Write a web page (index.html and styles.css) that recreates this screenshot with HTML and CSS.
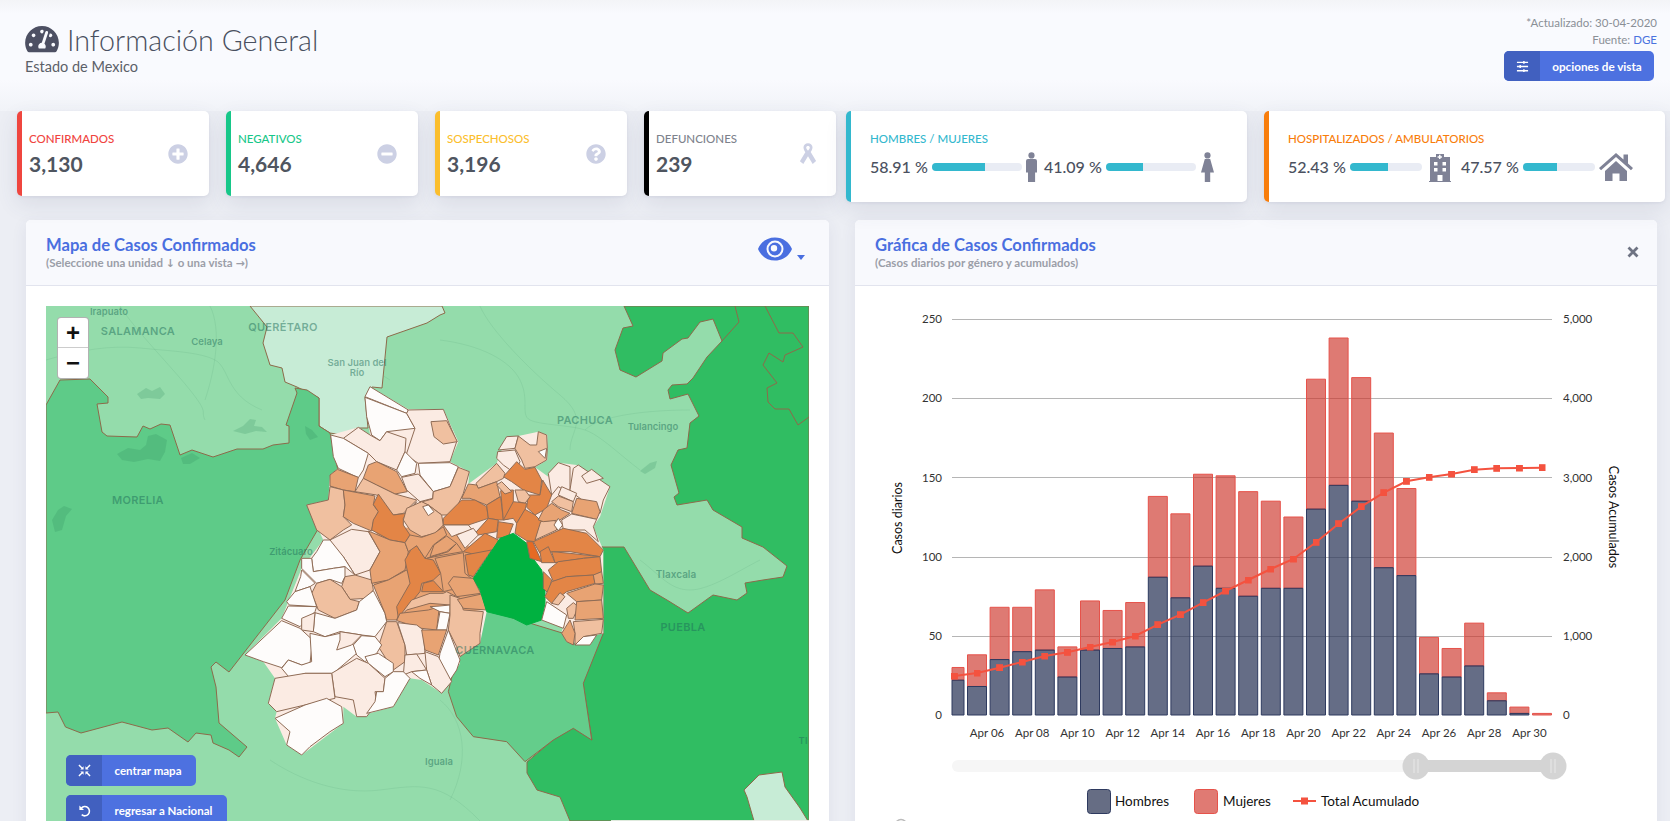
FILE: index.html
```html
<!DOCTYPE html>
<html lang="es">
<head>
<meta charset="utf-8">
<title>Información General</title>
<link rel="stylesheet" href="styles.css">
</head>
<body>
<div class="page">
  <header class="title-bar">
    <div class="title-left">
      <h1 class="page-title">
        <svg class="gauge" viewBox="0 0 576 512"><path d="M288 32C128.94 32 0 160.94 0 320c0 52.8 14.25 102.26 39.06 144.8 5.61 9.62 16.3 15.2 27.44 15.2h443c11.14 0 21.83-5.58 27.44-15.2C561.75 422.26 576 372.8 576 320c0-159.06-128.94-288-288-288zm0 64c14.71 0 26.58 10.13 30.32 23.65-1.11 2.26-2.64 4.23-3.45 6.67l-9.22 27.67c-5.13 3.49-10.97 6.01-17.64 6.01-17.67 0-32-14.33-32-32S270.33 96 288 96zM96 384c-17.67 0-32-14.33-32-32s14.33-32 32-32 32 14.33 32 32-14.33 32-32 32zm48-160c-17.67 0-32-14.33-32-32s14.33-32 32-32 32 14.33 32 32-14.33 32-32 32zm246.77-72.41l-61.33 184C343.13 347.33 352 364.54 352 384c0 11.72-3.38 22.55-8.88 32H232.88c-5.5-9.45-8.88-20.28-8.88-32 0-33.94 26.5-61.43 59.9-63.59l61.34-184.01c4.17-12.56 17.73-19.45 30.36-15.17 12.57 4.19 19.35 17.77 15.17 30.36zm14.66 57.2l15.52-46.55c3.47-1.29 7.13-2.23 11.05-2.23 17.67 0 32 14.33 32 32s-14.33 32-32 32c-11.38-.01-20.89-6.28-26.57-15.22zM480 384c-17.67 0-32-14.33-32-32s14.33-32 32-32 32 14.33 32 32-14.33 32-32 32z"/></svg>
        <span>Información General</span>
      </h1>
      <div class="page-sub">Estado de Mexico</div>
    </div>
    <div class="title-right">
      <div class="meta">*Actualizado: 30-04-2020</div>
      <div class="meta">Fuente: <a class="link">DGE</a></div>
      <button class="btn btn-opts">
        <span class="btn-ico"><svg viewBox="0 0 14 14" class="ico14"><path d="M1 2.5h12M1 7h12M1 11.5h12" stroke="#fff" stroke-width="1.5" fill="none"/><path d="M8.500 1v3M4.500 5.500v3M8.500 10v3" stroke="#fff" stroke-width="1.6" fill="none"/></svg></span>
        <span class="btn-txt">opciones de vista</span>
      </button>
    </div>
  </header>

  <section class="stats">
    <div class="stats-small">
      <div class="card small c-red">
        <div class="card-main"><div class="card-label">CONFIRMADOS</div><div class="card-value">3,130</div></div>
        <svg class="card-ico" viewBox="0 0 512 512"><path d="M256 8C119 8 8 119 8 256s111 248 248 248 248-111 248-248S393 8 256 8zm144 276c0 6.6-5.4 12-12 12h-92v92c0 6.6-5.4 12-12 12h-56c-6.6 0-12-5.4-12-12v-92h-92c-6.6 0-12-5.4-12-12v-56c0-6.6 5.4-12 12-12h92v-92c0-6.6 5.4-12 12-12h56c6.6 0 12 5.400 12 12v92h92c6.6 0 12 5.4 12 12v56z"/></svg>
      </div>
      <div class="card small c-green">
        <div class="card-main"><div class="card-label">NEGATIVOS</div><div class="card-value">4,646</div></div>
        <svg class="card-ico" viewBox="0 0 512 512"><path d="M256 8C119 8 8 119 8 256s111 248 248 248 248-111 248-248S393 8 256 8zM124 296c-6.6 0-12-5.4-12-12v-56c0-6.6 5.4-12 12-12h264c6.6 0 12 5.4 12 12v56c0 6.6-5.4 12-12 12H124z"/></svg>
      </div>
      <div class="card small c-yellow">
        <div class="card-main"><div class="card-label">SOSPECHOSOS</div><div class="card-value">3,196</div></div>
        <svg class="card-ico" viewBox="0 0 512 512"><path d="M504 256c0 136.997-111.043 248-248 248S8 392.997 8 256C8 119.083 119.043 8 256 8s248 111.083 248 248zM262.655 90c-54.497 0-89.255 22.957-116.549 63.758-3.536 5.286-2.353 12.415 2.715 16.258l34.699 26.31c5.205 3.947 12.621 3.008 16.665-2.122 17.864-22.658 30.113-35.797 57.303-35.797 20.429 0 45.698 13.148 45.698 32.958 0 14.976-12.363 22.667-32.534 33.976C247.128 238.528 216 254.941 216 296v4c0 6.627 5.373 12 12 12h56c6.627 0 12-5.373 12-12v-1.333c0-28.462 83.186-29.647 83.186-106.667 0-58.002-60.165-102-116.531-102zM256 338c-25.365 0-46 20.635-46 46 0 25.364 20.635 46 46 46s46-20.636 46-46c0-25.365-20.635-46-46-46z"/></svg>
      </div>
      <div class="card small c-black">
        <div class="card-main"><div class="card-label">DEFUNCIONES</div><div class="card-value">239</div></div>
        <svg class="card-ico ribbon" viewBox="0 0 20 24"><path d="M10 0c3 0 5 2 5 4.500 0 2-.9 3.700-2 5.300l6 10-3.800 3.200L10 14.500 4.800 23.200 1 20l6-10C5.800 8.200 5 6.500 5 4.500 5 2 7 0 10 0zm0 3C8.800 3 8 3.700 8 4.700c0 .9.800 2.200 2 3.700 1.200-1.500 2-2.800 2-3.700C12 3.700 11.200 3 10 3z"/></svg>
      </div>
    </div>
    <div class="stats-wide">
      <div class="card wide c-cyan">
        <div class="card-label">HOMBRES / MUJERES</div>
        <div class="pair-row">
          <span class="pct">58.91 %</span>
          <span class="bar b90"><span class="bar-fill" style="width:58.91%"></span></span>
          <svg class="person man" viewBox="0 0 13 30"><circle cx="6.500" cy="3.400" r="3.100"/><path d="M1 9a2 2 0 0 1 2-2h7a2 2 0 0 1 2 2v11.500h-1.900V30H3V20.500H1z"/></svg>
          <span class="pct gap-pct">41.09 %</span>
          <span class="bar b90"><span class="bar-fill" style="width:41.09%"></span></span>
          <svg class="person" viewBox="0 0 13 30"><circle cx="6.500" cy="3.400" r="3.100"/><path d="M3.800 7h5.400l3.800 13.500H9.200V30H3.800v-9.500H0z"/></svg>
        </div>
      </div>
      <div class="card wide c-orange">
        <div class="card-label">HOSPITALIZADOS / AMBULATORIOS</div>
        <div class="pair-row">
          <span class="pct">52.43 %</span>
          <span class="bar b72"><span class="bar-fill" style="width:52.43%"></span></span>
          <svg class="hosp" viewBox="0 0 26 30"><path fill-rule="evenodd" d="M2 30v-1h1V5h6V2h8v3h6v24h1v1zM12 2.800v1.400h-1.400v1.500H12v1.400h1.500V5.700h1.400V4.200h-1.400V2.800zM7 10v3.500h3.500V10zm8.500 0v3.500H19V10zM7 16v3.500h3.500V16zm8.500 0v3.500H19V16zM10.500 23v6h5v-6z"/></svg>
          <span class="pct gap-pct2">47.57 %</span>
          <span class="bar b72"><span class="bar-fill" style="width:47.57%"></span></span>
          <svg class="house" viewBox="0 0 34 28"><path d="M17 0 0 15l2 2.200L17 4l15 13.200 2-2.200-5-4.400V1.500h-4.500v5.100zM6 18v10h7.500v-7.500h7V28H28V18L17 8z"/></svg>
        </div>
      </div>
    </div>
  </section>

  <section class="panels">
    <article class="panel">
      <div class="panel-head">
        <div>
          <div class="panel-title">Mapa de Casos Confirmados</div>
          <div class="panel-sub">(Seleccione una unidad <span class="arrow">↓</span> o una vista <span class="arrow">→</span>)</div>
        </div>
        <div class="view-toggle">
          <svg class="eye" viewBox="0 0 34 24"><path fill-rule="evenodd" d="M0 12C3 5 9 .5 17 .5S31 5 34 12c-3 7-9 11.500-17 11.500S3 19 0 12zm17-8.500a8.500 8.500 0 1 0 0 17 8.500 8.500 0 0 0 0-17z"/><path fill-rule="evenodd" d="M17 5.500a6.500 6.500 0 1 1 0 13 6.500 6.500 0 0 1 0-13zM16 8a3.200 3.200 0 0 0 0 6.400A3.200 3.200 0 0 0 16 8z"/></svg>
          <span class="caret"></span>
        </div>
      </div>
      <div class="panel-body">
        <div class="map">
          <svg class="map-svg" viewBox="46 306 763 515" width="763" height="515">
            <rect class="g-base" x="46" y="306" width="763" height="515"/>
            <g class="road">
              <path d="M46 360C80 350 110 345 140 348S200 352 215 360 225 395 262 410"/>
              <path d="M120 306C135 330 170 365 190 390S200 410 205 420"/>
              <path d="M210 306C222 330 215 370 205 400"/>
              <path d="M440 340C480 345 510 360 520 380S520 415 530 420 570 425 585 430 620 455 640 470"/>
              <path d="M480 306C490 330 530 370 560 395S570 430 570 450"/>
              <path d="M585 430C600 415 650 410 690 410"/>
              <path d="M640 560C660 575 670 590 690 590S740 570 760 560"/>
              <path d="M300 325C320 340 350 355 390 380"/>
              <path d="M270 760C300 780 340 795 380 790S440 780 480 821"/>
              <path d="M440 700C465 720 470 760 450 800"/>
              <path d="M60 520C90 505 120 490 150 492S240 490 270 470"/>
              <path d="M60 610C100 590 150 570 190 575S230 585 240 590"/>
              <path d="M620 640C650 650 700 660 730 680S750 695 760 700"/>
            </g>
            <path class="g-pale b" d="M250 306 267 327 263 343 270 365 282 368 285 382 297 387 319 398 319 426 330 433 342 435 357 428 368 428 365 397 372 387 382 388 387 337 427 323 440 315 445 313 442 306Z"/>
            <path class="g-mid b" d="M46 405 60 380 90 379 108 397 108 403 97 404 102 432 107 436 137 437 143 426 150 429 161 424 170 425 180 455 192 450 213 457 237 449 263 449 273 445 289 443 289 426 286 425 297 393 295 388 307 390 319 398 319 426 330 433 340 480 335 500 300 560 285 600 229 672 216 662 211 667 216 687 219 723 247 747 239 757 229 750 213 743 211 735 196 733 188 742 168 728 152 730 122 722 81 733 65.500 727 58 712 46 713Z"/>
            <path class="g-dark b" d="M624 306 633 326 623 328 615 350 620 370 636 377 662 361 663 353 682 339 688 338 700 322 713 319 722 341 707 357 693 378 687 384 672 385 668 390 670 399 688 394 699 416 690 423 687 448 678 450 671 465 679 493 674 497 677 505 707 500 713 510 742 527 742 538 763 547 787 566 783 577 763 580 745 583 747 593 737 600 713 595 706 600 688 613 667 600 650 590 624 547 603 547 596 545 603 587 603 633 583 683 592 740 573 728 553 740 527 762 527 773 537 790 560 797 570 821 809 821 809 306Z"/>
            <path class="g-line" d="M735 306 739 322 722 341M765 306 779 333 793 333 803 347 785 355 783 362 769 353 763 365 777 383 767 388 768 402 775 409 789 409 798 425 809 417"/>
            <path class="g-pale b" d="M759 775 782 772 785 787 800 808 808 821 754 821 747 797 744 790Z"/>
            <g class="lake">
              <path d="M137 394 146 388 152 391 160 387 165 394 160 399 148 398 141 399Z"/>
              <path d="M233 431 243 426 250 419 256 420 254 426 262 427 267 432 256 431 245 434Z"/>
              <path d="M117 454 128 448 140 450 146 445 148 436 156 434 167 440 165 452 160 461 148 459 134 462 122 460Z"/>
              <path d="M181 458 192 453 200 458 190 464 183 464Z"/>
              <path d="M52 520 58 510 64 506 72 509 66 516 62 530 55 532Z"/>
              <path d="M640 471 650 463 657 461 655 468 645 474Z"/>
              <path d="M305 426 312 430 318 437 310 440 306 434Z"/>
              <path d="M352 548 364 545 372 552 362 556Z"/>
            </g>
            <g class="maplabels">
              <text class="lb-s" x="109" y="315">Irapuato</text>
              <text class="lb-c" x="138" y="335">SALAMANCA</text>
              <text class="lb-s" x="207" y="345">Celaya</text>
              <text class="lb-c" x="283" y="331">QUERÉTARO</text>
              <text class="lb-s" x="357" y="366">San Juan del</text>
              <text class="lb-s" x="357" y="376">Río</text>
              <text class="lb-c" x="585" y="424">PACHUCA</text>
              <text class="lb-s" x="653" y="430">Tulancingo</text>
              <text class="lb-c" x="138" y="504">MORELIA</text>
              <text class="lb-s" x="291" y="555">Zitácuaro</text>
              <text class="lb-m" x="676" y="578">Tlaxcala</text>
              <text class="lb-c" x="683" y="631">PUEBLA</text>
              <text class="lb-s" x="439" y="765">Iguala</text>
              <text class="lb-s" x="803" y="744">Tl</text>
            </g>
            <g transform="translate(230 370) scale(.33333)">
              <path class="g-morelos b3" d="M680 860 655 965 680 1040 730 1100 830 1115 885 1175 970 1110 1030 1075 1085 1110 1060 940 1120 790 1000 790 770 720Z"/>
              <path class="u" d="M420 50 535 118 640 118 685 215 660 275 718 305 715 342 800 280 830 200 865 198 925 185 952 195 952 270 915 292 955 320 985 278 1040 285 1140 350 1110 440 1090 470 1120 540 1120 790 1100 795 1080 825 1010 815 995 785 1000 770 935 750 770 725 750 820 690 860 690 880 635 970 575 930 540 925 490 1010 380 1040 340 1010 340 1060 215 1155 170 1125 135 1045 140 1025 115 1000 135 925 100 875 45 855 155 745 215 595 280 510 230 405 295 390 300 315 325 295 302 195 385 172 420 195 405 80Z"/>
              <path class="um" d="M440 480 700 460 760 720 500 750 430 640Z"/>
              <g class="muns">
                <polygon class="w" points="420,50 535,120 530,130 405,80"/>
                <polygon class="w" points="405,82 530,130 555,175 470,185 450,212 425,195 410,140"/>
                <polygon class="p" points="535,120 640,118 680,215 660,275 565,280 535,260 530,250 555,175 530,130"/>
                <polygon class="l" points="603,155 650,152 682,215 640,222 612,200"/>
                <polygon class="p" points="340,205 385,172 420,195 450,212 470,185 528,205 525,245 500,300 440,275 415,250"/>
                <polygon class="w" points="302,195 340,205 415,250 400,300 385,323 325,295 310,260"/>
                <polygon class="w" points="525,245 560,280 555,310 515,320 500,300"/>
                <polygon class="w" points="565,280 660,278 685,290 660,350 610,365 570,315"/>
                <polygon class="p" points="515,322 565,312 610,365 608,385 570,395 530,360"/>
                <polygon class="l" points="685,292 718,305 700,370 670,435 635,435 595,405 570,397 608,387 610,365 660,350"/>
                <polygon class="m" points="440,275 500,305 532,365 495,372 440,345 400,325 415,285"/>
                <polygon class="l" points="400,325 440,345 495,372 560,390 520,430 490,435 440,375 375,365"/>
                <polygon class="m" points="322,298 385,322 375,365 340,360 300,348 300,315"/>
                <polygon class="l" points="300,350 340,360 345,405 340,440 365,465 340,480 300,510 260,480 230,405 295,390"/>
                <polygon class="m" points="340,360 435,378 430,405 445,425 430,455 425,483 370,460 340,440 345,405"/>
                <polygon class="d" points="445,372 490,435 530,430 560,395 520,445 520,465 540,495 525,518 480,510 425,480 430,450 445,425 430,403"/>
                <polygon class="l" points="575,395 595,405 635,435 640,465 615,490 575,500 540,480 520,450 530,415"/>
                <polygon class="w" points="578,410 595,405 612,425 595,437"/>
                <polygon class="p" points="300,510 365,478 415,485 450,545 420,600 375,615 340,560 310,530"/>
                <polygon class="w" points="280,510 300,510 340,560 375,615 345,590 310,595 250,605 245,565 260,545"/>
                <polygon class="w" points="215,565 245,565 250,605 310,595 345,590 345,620 335,640 300,628 260,640 215,595"/>
                <polygon class="w" points="215,600 255,640 240,650 195,665 212,620"/>
                <polygon class="l" points="345,620 375,615 425,630 430,660 410,685 360,688 335,650"/>
                <polygon class="l" points="260,640 300,628 335,650 360,688 388,695 380,720 315,745 265,720 245,670"/>
                <polygon class="w" points="195,665 240,650 260,710 178,705 170,695"/>
                <polygon class="w" points="175,708 260,710 255,725 210,770 155,745"/>
                <polygon class="w" points="255,728 315,745 380,720 388,695 430,662 465,730 470,755 435,800 395,795 330,785 285,800 250,785"/>
                <polygon class="p" points="215,745 255,728 250,785 215,780"/>
                <polygon class="m" points="415,483 480,510 525,518 535,545 525,600 475,630 425,640 420,600 450,545"/>
                <polygon class="m" points="430,645 475,630 530,600 545,630 500,750 470,750 465,730"/>
                <polygon class="d" points="560,527 585,565 610,570 632,610 610,630 575,640 570,665 505,745 500,710 540,640 525,570 545,535"/>
                <polygon class="d" points="610,632 640,665 575,665 580,640"/>
                <polygon class="m" points="525,518 540,495 575,502 615,488 640,470 650,495 610,525 585,565 560,527 535,545"/>
                <polygon class="m" points="650,498 680,520 650,545 600,560 612,525"/>
                <polygon class="m" points="680,520 698,545 640,555 590,565 655,545"/>
                <polygon class="m" points="615,565 700,548 705,610 730,630 740,650 660,660 640,665 632,610"/>
                <polygon class="m" points="655,640 670,620 730,625 752,670 680,680"/>
                <polygon class="l" points="500,750 545,690 600,670 640,670 650,665 680,680 660,705 600,700 530,720"/>
                <polygon class="m" points="510,730 595,720 628,710 620,780 575,775 500,752"/>
                <polygon class="w" points="600,710 630,708 660,705 660,730 630,725"/>
                <polygon class="w" points="630,725 660,730 650,780 620,780"/>
                <polygon class="l" points="660,675 690,685 700,720 760,725 750,790 750,820 690,860 680,830 655,780 660,735"/>
                <polygon class="m" points="682,688 755,672 770,720 700,715"/>
                <polygon class="l" points="470,755 500,755 525,825 525,875 490,900 445,830"/>
                <polygon class="p" points="503,758 560,765 580,780 585,850 530,855 525,825"/>
                <polygon class="m" points="575,780 650,780 625,855 585,840"/>
                <polygon class="w" points="655,780 680,845 690,870 680,900 660,930 625,880 630,850"/>
                <polygon class="p" points="525,855 560,852 590,900 545,905 520,915"/>
                <polygon class="p" points="585,845 625,860 665,935 635,970 605,945 590,900"/>
                <polygon class="w" points="545,905 590,900 605,945 570,925"/>
                <polygon class="w" points="45,855 155,752 210,775 248,810 240,880 215,885 175,870 155,893 100,875"/>
                <polygon class="w" points="240,790 285,800 330,790 375,830 380,850 345,880 310,910 225,910 180,925 155,895 175,870 215,885 245,875"/>
                <polygon class="p" points="330,785 395,795 365,825 320,840 330,810"/>
                <polygon class="w" points="395,797 435,800 455,825 440,850 405,875 380,855 370,825"/>
                <polygon class="w" points="405,860 445,850 490,880 490,905 465,920 415,880"/>
                <polygon class="p" points="305,910 380,865 415,880 465,925 460,965 435,965 440,1000 410,1040 380,1040 370,990 315,980"/>
                <polygon class="p" points="135,925 225,910 305,910 315,985 225,1005 140,1025 115,1000"/>
                <polygon class="w" points="465,925 490,905 520,905 540,925 490,1010 410,1030 435,995 440,965 460,965"/>
                <polygon class="w" points="135,1045 225,1005 290,985 335,1010 340,1060 300,1085 240,1130 215,1155 170,1125 180,1085"/>
                <polygon class="p" points="830,200 865,198 855,235 805,240"/>
                <polygon class="p" points="803,245 855,240 870,275 855,310 820,285 800,265"/>
                <polygon class="l" points="865,198 900,225 920,225 925,185 950,195 952,235 950,270 915,290 885,295 875,270 855,235"/>
                <polygon class="w" points="925,245 950,235 945,265"/>
                <polygon class="d" points="820,320 860,275 885,298 915,292 935,330 930,375 880,360 845,335"/>
                <polygon class="l" points="800,280 825,310 820,325 800,335 745,355 738,340"/>
                <polygon class="d" points="938,330 965,375 950,415 915,435 890,412 895,375 930,375"/>
                <polygon class="m" points="695,385 715,342 740,345 745,355 800,335 810,380 770,405 720,385"/>
                <polygon class="d" points="640,445 695,390 735,390 770,410 775,445 715,465 640,465"/>
                <polygon class="d" points="770,405 812,380 820,450 805,450 775,445"/>
                <polygon class="d" points="812,362 850,360 850,395 840,445 820,450"/>
                <polygon class="l" points="855,360 885,360 900,380 885,400 865,395"/>
                <polygon class="l" points="800,345 815,335 845,365 825,372"/>
                <polygon class="d" points="850,395 890,400 885,420 860,460 850,445 820,450"/>
                <polygon class="d" points="735,490 775,445 805,450 800,485 745,495"/>
                <polygon class="d" points="805,455 850,462 835,500 800,505"/>
                <polygon class="d" points="860,460 885,418 915,435 935,455 915,515 890,512 855,490"/>
                <polygon class="l" points="932,455 975,450 980,480 915,510"/>
                <polygon class="m" points="940,420 965,400 995,420 1020,430 990,450 940,455 925,450"/>
                <polygon class="w" points="985,445 998,465 985,482 972,465"/>
                <polygon class="p" points="955,310 985,278 1020,290 1020,370 985,350 965,375"/>
                <polygon class="p" points="1030,295 1045,285 1140,350 1120,390 1110,430 1050,385 1030,370 1020,360"/>
                <polygon class="p" points="1055,318 1085,298 1120,325 1070,340"/>
                <polygon class="p" points="985,375 995,350 1040,370 1030,395"/>
                <polygon class="l" points="965,395 985,378 1030,395 1025,425 985,410"/>
                <polygon class="m" points="1040,385 1100,395 1110,425 1100,448 1025,430"/>
                <polygon class="p" points="995,450 1025,432 1100,448 1090,470 1105,515 1065,480 1000,480"/>
                <polygon class="p" points="640,465 715,465 735,490 690,490 665,500"/>
                <polygon class="p" points="680,495 730,475 745,495 705,535"/>
                <polygon class="d" points="700,545 765,490 805,510 800,535 740,555"/>
                <polygon class="d" points="705,555 785,540 730,620 715,615"/>
                <polygon class="cdmx" points="730,625 810,505 850,490 890,520 905,560 935,600 945,650 945,700 935,750 890,765 850,745 770,725 750,660"/>
                <polygon class="x" points="890,515 908,515 935,575 900,565"/>
                <polygon class="d" points="910,515 1000,475 1070,490 1120,540 1110,560 1020,545 975,545 930,550"/>
                <polygon class="d" points="930,545 955,530 975,578 935,578"/>
                <polygon class="d" points="965,545 1020,550 1110,560 1060,565 975,578"/>
                <polygon class="d" points="955,600 985,575 1060,565 1110,560 1115,605 1095,615 1010,620 970,635"/>
                <polygon class="d" points="940,605 965,630 955,670 940,655"/>
                <polygon class="d" points="965,635 1010,620 1090,615 1095,640 1010,665 965,700 945,680"/>
                <polygon class="m" points="1090,615 1115,605 1120,640 1095,642"/>
                <polygon class="m" points="1010,670 1095,642 1120,645 1115,690 1040,695"/>
                <polygon class="l" points="965,700 990,668 1005,680 985,705"/>
                <polygon class="w" points="935,750 950,695 1010,735 1000,775"/>
                <polygon class="l" points="1010,715 1030,698 1045,710 1030,745 1015,745"/>
                <polygon class="m" points="1040,695 1115,690 1120,745 1035,750"/>
                <polygon class="l" points="1030,755 1120,748 1115,790 1060,800 1035,825 1035,790"/>
                <polygon class="m" points="995,790 1020,750 1035,790 1030,825 1010,815"/>
                <polygon class="w" points="1035,825 1060,800 1100,795 1080,825"/>
              </g>
              <text class="lb-c3" x="795" y="852">CUERNAVACA</text>
            </g>
          </svg>
          <div class="zoom-ctl"><span class="zoom-btn zoom-plus">+</span><span class="zoom-btn">−</span></div>
          <div class="map-actions">
            <button class="btn btn-map">
              <span class="btn-ico"><svg viewBox="0 0 14 14" class="ico14"><path d="M1 1l3.500 3.500M13 1 9.500 4.500M1 13l3.500-3.500M13 13 9.500 9.500" stroke="#fff" stroke-width="1.500" fill="none"/><path d="M6 6H2.500L6 2.500zM8 6h3.500L8 2.500zM6 8H2.500L6 11.500zM8 8h3.500L8 11.500z" fill="#fff"/></svg></span>
              <span class="btn-txt">centrar mapa</span>
            </button>
            <button class="btn btn-map">
              <span class="btn-ico"><svg viewBox="0 0 14 14" class="ico14"><path d="M3.500 4.500A5 5 0 1 1 4 11.500" stroke="#fff" stroke-width="1.700" fill="none"/><path d="M1.500 1.500v5h5z" fill="#fff"/></svg></span>
              <span class="btn-txt">regresar a Nacional</span>
            </button>
          </div>
          <div class="attribution"></div>
        </div>
      </div>
    </article>

    <article class="panel">
      <div class="panel-head">
        <div>
          <div class="panel-title">Gráfica de Casos Confirmados</div>
          <div class="panel-sub">(Casos diarios por género y acumulados)</div>
        </div>
        <svg class="close-x" viewBox="0 0 12 12"><path d="M1.500 1.500l9 9M10.500 1.500l-9 9" stroke-width="2.800" fill="none"/></svg>
      </div>
      <div class="chart-body">
        <svg class="chart" viewBox="855 286 802 535" width="802" height="535">
          <defs>
            <marker id="sq" viewBox="0 0 7 7" refX="3.500" refY="3.500" markerWidth="7" markerHeight="7" markerUnits="userSpaceOnUse"><rect width="7" height="7" fill="#f4523f"/></marker>
          </defs>
          <g class="grid">
            <path d="M952 319.500H1552M952 398.500H1552M952 477.500H1552M952 557.500H1552M952 636.500H1552"/>
          </g>
          <g class="ylab">
            <text x="942" y="323">250</text><text x="942" y="402">200</text><text x="942" y="482">150</text><text x="942" y="561">100</text><text x="942" y="640">50</text><text x="942" y="719">0</text>
          </g>
          <g class="ylab2">
            <text x="1563" y="323">5,000</text><text x="1563" y="402">4,000</text><text x="1563" y="482">3,000</text><text x="1563" y="561">2,000</text><text x="1563" y="640">1,000</text><text x="1563" y="719">0</text>
          </g>
          <text class="axt" transform="translate(902 518) rotate(-90)">Casos diarios</text>
          <text class="axt" transform="translate(1609 517) rotate(90)">Casos Acumulados</text>
          <g transform="translate(0 715) scale(1 -1.584)">
            <g class="muj">
              <rect x="952" y="22" width="12" height="8"/><rect x="967.500" y="18" width="19" height="20"/><rect x="990.100" y="35" width="19" height="33"/><rect x="1012.700" y="40" width="19" height="28"/><rect x="1035.300" y="41" width="19" height="38"/><rect x="1057.900" y="24" width="19" height="19"/><rect x="1080.500" y="41" width="19" height="31"/><rect x="1103.100" y="42" width="19" height="24"/><rect x="1125.700" y="43" width="19" height="28"/><rect x="1148.300" y="87" width="19" height="51"/><rect x="1170.900" y="74" width="19" height="53"/><rect x="1193.500" y="94" width="19" height="58"/><rect x="1216.100" y="80" width="19" height="71"/><rect x="1238.700" y="75" width="19" height="66"/><rect x="1261.300" y="80" width="19" height="55"/><rect x="1283.900" y="80" width="19" height="45"/><rect x="1306.500" y="130" width="19" height="82"/><rect x="1329.100" y="145" width="19" height="93"/><rect x="1351.700" y="135" width="19" height="78"/><rect x="1374.300" y="93" width="19" height="85"/><rect x="1396.900" y="88" width="19" height="55"/><rect x="1419.500" y="26" width="19" height="23"/><rect x="1442.100" y="24" width="19" height="18"/><rect x="1464.700" y="31" width="19" height="27"/><rect x="1487.300" y="9" width="19" height="5"/><rect x="1509.900" y="1" width="19" height="4"/><rect x="1532.500" y="0" width="19" height="1"/>
            </g>
            <g class="hom">
              <rect x="952" y="0" width="12" height="22"/><rect x="967.500" y="0" width="19" height="18"/><rect x="990.100" y="0" width="19" height="35"/><rect x="1012.700" y="0" width="19" height="40"/><rect x="1035.300" y="0" width="19" height="41"/><rect x="1057.900" y="0" width="19" height="24"/><rect x="1080.500" y="0" width="19" height="41"/><rect x="1103.100" y="0" width="19" height="42"/><rect x="1125.700" y="0" width="19" height="43"/><rect x="1148.300" y="0" width="19" height="87"/><rect x="1170.900" y="0" width="19" height="74"/><rect x="1193.500" y="0" width="19" height="94"/><rect x="1216.100" y="0" width="19" height="80"/><rect x="1238.700" y="0" width="19" height="75"/><rect x="1261.300" y="0" width="19" height="80"/><rect x="1283.900" y="0" width="19" height="80"/><rect x="1306.500" y="0" width="19" height="130"/><rect x="1329.100" y="0" width="19" height="145"/><rect x="1351.700" y="0" width="19" height="135"/><rect x="1374.300" y="0" width="19" height="93"/><rect x="1396.900" y="0" width="19" height="88"/><rect x="1419.500" y="0" width="19" height="26"/><rect x="1442.100" y="0" width="19" height="24"/><rect x="1464.700" y="0" width="19" height="31"/><rect x="1487.300" y="0" width="19" height="9"/><rect x="1509.900" y="0" width="19" height="1"/>
            </g>
          </g>
          <polyline class="total" marker-start="url(#sq)" marker-mid="url(#sq)" marker-end="url(#sq)" points="954.400,676 977,673 999.600,667.700 1022.200,662 1044.800,656 1067.400,652.300 1090,647 1112.600,642 1135.200,636 1157.800,624.700 1180.400,614.700 1203,602.700 1225.600,591 1248.200,580 1270.800,569 1293.400,559 1316,542.300 1338.600,523.700 1361.200,506.700 1383.800,492.700 1406.400,481.300 1429,477.300 1451.600,474 1474.200,469.700 1496.800,468.300 1519.400,468 1542,467.700"/>
          <g class="xlab">
            <text x="987" y="737">Apr 06</text><text x="1032.200" y="737">Apr 08</text><text x="1077.400" y="737">Apr 10</text><text x="1122.600" y="737">Apr 12</text><text x="1167.800" y="737">Apr 14</text><text x="1213" y="737">Apr 16</text><text x="1258.200" y="737">Apr 18</text><text x="1303.400" y="737">Apr 20</text><text x="1348.600" y="737">Apr 22</text><text x="1393.800" y="737">Apr 24</text><text x="1439" y="737">Apr 26</text><text x="1484.200" y="737">Apr 28</text><text x="1529.400" y="737">Apr 30</text>
          </g>
          <rect class="sl-track" x="952" y="760" width="601" height="12" rx="6"/>
          <rect class="sl-range" x="1416" y="760" width="137" height="12"/>
          <circle class="sl-h" cx="1416" cy="766" r="13.500"/>
          <circle class="sl-h" cx="1553" cy="766" r="13.500"/>
          <path class="sl-g" d="M1414 759v14M1418 759v14M1551 759v14M1555 759v14"/>
          <rect class="lg-h" x="1087.500" y="789.500" width="23" height="24" rx="3"/>
          <text class="lg" x="1115" y="806">Hombres</text>
          <rect class="lg-m" x="1194.500" y="789.500" width="23" height="24" rx="3"/>
          <text class="lg" x="1223" y="806">Mujeres</text>
          <path class="lg-l" d="M1293 801h23"/>
          <rect class="lg-s" x="1301" y="797.500" width="7" height="7"/>
          <text class="lg" x="1321" y="806">Total Acumulado</text>
          <circle class="foot" cx="901" cy="825" r="5.500"/>
        </svg>
      </div>
    </article>
  </section>
</div>
</body>
</html>
```
FILE: styles.css
```css
* { box-sizing: border-box; }
html, body { margin: 0; padding: 0; height: 100%; overflow: hidden; }
body {
  background: #eceef4;
  font-family: "Lato", "Open Sans", sans-serif;
  color: #495057;
}
.page { width: 1670px; }

.title-bar {
  display: flex;
  justify-content: space-between;
  height: 111px;
  padding: 14px 13px 0 25px;
  background: linear-gradient(#f3f4f7 0, #f9fafe 14px, #f9fafe 80px, #f1f3f8 111px);
}
.page-title {
  display: flex;
  align-items: center;
  gap: 8px;
  margin: 6px 0 0;
  font-size: 28.700px;
  font-weight: 300;
  line-height: 40px;
  color: #495060;
}
.gauge { width: 34px; height: 30px; margin-top: -2px; fill: #4d5063; }
.page-sub { font-size: 14.500px; line-height: 17px; color: #5b6068; margin-top: -2px; }
.title-right { display: flex; flex-direction: column; align-items: flex-end; }
.meta { font-size: 11.500px; line-height: 17px; color: #8a8f96; }
.link { color: #4a72de; }
.btn {
  display: flex;
  align-items: stretch;
  padding: 0;
  border: 0;
  border-radius: 5px;
  background: #4d71e0;
  color: #fff;
  font-family: inherit;
  font-size: 11.700px;
  font-weight: 700;
  overflow: hidden;
}
.btn-ico {
  display: flex;
  align-items: center;
  justify-content: center;
  width: 36px;
  background: #4160bf;
}
.ico14 { width: 13px; height: 13px; display: block; }
.btn-txt { display: flex; align-items: center; justify-content: center; flex: 1; }
.btn-opts { width: 150px; height: 30px; margin: 3px 3px 0 0; }

.stats { display: flex; align-items: flex-start; gap: 10px; padding-left: 17px; height: 109px; }
.stats-small, .stats-wide { display: flex; align-items: flex-start; gap: 17px; }
.card {
  position: relative;
  display: flex;
  background: #fff;
  border-radius: 5px;
  border-left: 5px solid #000;
  box-shadow: 0 8px 22px rgba(60, 70, 110, .11), 0 1px 3px rgba(60, 70, 110, .08);
}
.small { width: 192px; height: 85px; padding: 21px 0 0 7px; justify-content: space-between; }
.wide { width: 401px; height: 91px; padding: 21px 0 0 19px; flex-direction: column; }
.c-red { border-color: #ef463f; } .c-red .card-label { color: #f0443e; }
.c-green { border-color: #17c789; } .c-green .card-label { color: #17c789; }
.c-yellow { border-color: #fbbe2d; } .c-yellow .card-label { color: #fbbe2d; }
.c-black { border-color: #000; } .c-black .card-label { color: #7d828c; }
.c-cyan { border-color: #33b8ce; } .c-cyan .card-label { color: #33b8ce; }
.c-orange { border-color: #f87d0b; } .c-orange .card-label { color: #f87d0b; }
.card-label { font-size: 11.500px; line-height: 14px; font-weight: 500; }
.card-value { font-size: 21px; font-weight: 700; line-height: 26px; margin-top: 5px; color: #4f5560; }
.card-ico { width: 20px; height: 20px; margin: 12px 21px 0 0; fill: #ccd0e4; }
.ribbon { width: 18px; height: 22px; margin: 11px 19px 0 0; }
.pair-row { display: flex; align-items: center; margin-top: 6px; }
.pct { font-size: 16px; font-weight: 500; line-height: 30px; width: 58px; white-space: nowrap; color: #4b5160; }
.gap-pct { margin-left: 6px; }
.gap-pct2 { margin-left: 8px; }
.bar { display: block; height: 8px; border-radius: 4px; background: #e9ecf4; overflow: hidden; margin-left: 4px; }
.bar-fill { display: block; height: 100%; background: #33b8ce; }
.b90 { width: 90px; }
.b72 { width: 72px; }
.person { width: 13px; height: 30px; margin-left: 5px; fill: #7f8296; }
.man { margin-left: 3px; }
.hosp { width: 26px; height: 30px; margin-left: 5px; fill: #7f8296; }
.house { width: 34px; height: 28px; margin-left: 4px; fill: #7f8296; }

.panels { display: flex; gap: 26px; padding-left: 26px; }
.panel {
  flex: none;
  width: 803px;
  height: 640px;
  background: #fff;
  border-radius: 5px;
  box-shadow: 0 4px 16px rgba(60, 70, 110, .08);
}
.panel + .panel { width: 802px; }
.panel-head {
  display: flex;
  justify-content: space-between;
  height: 66px;
  padding: 15px 24px 0 20px;
  background: #f8f9fd;
  border-bottom: 1px solid #e2e4ee;
  border-radius: 5px 5px 0 0;
}
.panel-title { font-size: 16.600px; line-height: 20px; font-weight: 700; color: #4a6fe0; }
.panel-sub { font-size: 11.500px; line-height: 14px; font-weight: 700; color: #9b9ea8; margin-top: 1px; }
.arrow { font-family: "DejaVu Sans", sans-serif; font-weight: 700; font-size: 11px; }
.view-toggle { display: flex; align-items: flex-end; gap: 5px; height: 29px; }
.eye { width: 34px; height: 24px; fill: #4a6fe0; margin-bottom: 3px; }
.caret { width: 0; height: 0; margin-bottom: 4px; border: 4px solid transparent; border-top: 5px solid #4a6fe0; border-bottom: 0; }
.close-x { width: 12px; height: 12px; margin: 11px -6px 0 0; stroke: #6e7383; }

.panel-body { padding: 20px 20px 0; }
.map { position: relative; width: 763px; height: 515px; overflow: hidden; background: #94dcab; }
.map-svg { display: block; }
.g-base { fill: #94dcab; }
.g-pale { fill: #c7ecd6; }
.g-mid { fill: #5ecb88; }
.g-dark { fill: #30bd62; }
.g-morelos { fill: #64cd8b; }
.b { stroke: #8d6a4a; stroke-width: 1; stroke-linejoin: round; }
.b3 { stroke: #8d6a4a; stroke-width: 3; stroke-linejoin: round; }
.g-line { fill: none; stroke: #8d6a4a; stroke-width: 1; }
.road path { fill: none; stroke: rgba(30, 110, 80, .09); stroke-width: 1; }
.lake { fill: rgba(40, 130, 90, .2); }
.maplabels text, .lb-c3 { font-family: "Inter", "Lato", sans-serif; text-anchor: middle; fill: rgba(30, 110, 90, .5); }
.lb-s { font-size: 9.500px; font-weight: 600; }
.lb-c { font-size: 11px; font-weight: 600; letter-spacing: .3px; }
.lb-m { font-size: 10px; font-weight: 600; }
.lb-c3 { font-size: 33px; font-weight: 600; letter-spacing: 1px; }
.u { fill: #fbebe3; }
.um { fill: #e8a373; }
.muns polygon { stroke: #8f6b55; stroke-width: 3; stroke-linejoin: round; }
.w { fill: #fefcfb; }
.p { fill: #fbebe3; }
.l { fill: #f0c0a0; }
.m { fill: #e8a373; }
.d { fill: #e38546; }
.x { fill: #e66a24; }
.muns .cdmx { fill: #00b140; stroke: #00b140; }

.zoom-ctl {
  position: absolute;
  top: 11px;
  left: 11px;
  width: 32px;
  border-radius: 4px;
  border: 1px solid rgba(0, 0, 0, .3);
  background: #fff;
  overflow: hidden;
}
.zoom-btn {
  display: flex;
  align-items: center;
  justify-content: center;
  height: 30px;
  font-family: "Liberation Sans", sans-serif;
  font-size: 24px;
  font-weight: 700;
  color: #111;
}
.zoom-plus { border-bottom: 1px solid #ccc; }
.map-actions { position: absolute; left: 20px; top: 449px; display: flex; flex-direction: column; align-items: flex-start; gap: 9px; }
.btn-map { height: 31px; width: 130px; }
.btn-map .btn-txt { padding-right: 2px; font-size: 11.500px; }
.btn-map + .btn-map { width: 161px; }
.attribution { position: absolute; right: 0; bottom: 0; width: 198px; height: 1px; background: rgba(255, 255, 255, .8); }

.chart-body { padding: 0; }
.chart { display: block; }
.chart text { font-family: "Lato", "Open Sans", sans-serif; }
.grid path { stroke: #b5b5b5; stroke-width: 1; fill: none; }
.ylab text { font-size: 11.500px; text-anchor: end; fill: #333; }
.ylab2 text { font-size: 11.500px; fill: #333; }
.xlab text { font-size: 11.500px; text-anchor: middle; fill: #333; }
.axt { font-size: 12.500px; text-anchor: middle; fill: #111; }
.muj rect { fill: rgba(205, 50, 40, .65); stroke: #e6524a; stroke-width: 1; vector-effect: non-scaling-stroke; }
.hom rect { fill: rgba(47, 58, 92, .74); stroke: #2e3a5f; stroke-width: 1; vector-effect: non-scaling-stroke; }
.total { fill: none; stroke: #f4523f; stroke-width: 2; }
.sl-track { fill: #f6f6f6; }
.sl-range { fill: #d4d4d4; }
.sl-h { fill: #d4d4d4; }
.sl-g { stroke: #e8e8e8; stroke-width: 1; }
.lg { font-size: 13.500px; fill: #111; }
.lg-h { fill: #666d84; stroke: #2e3a5f; }
.lg-m { fill: #e07a73; stroke: #e6524a; }
.lg-l { stroke: #f4523f; stroke-width: 2; fill: none; }
.lg-s { fill: #f4523f; }
.foot { fill: none; stroke: #bbb; stroke-width: 1.500; }
```
